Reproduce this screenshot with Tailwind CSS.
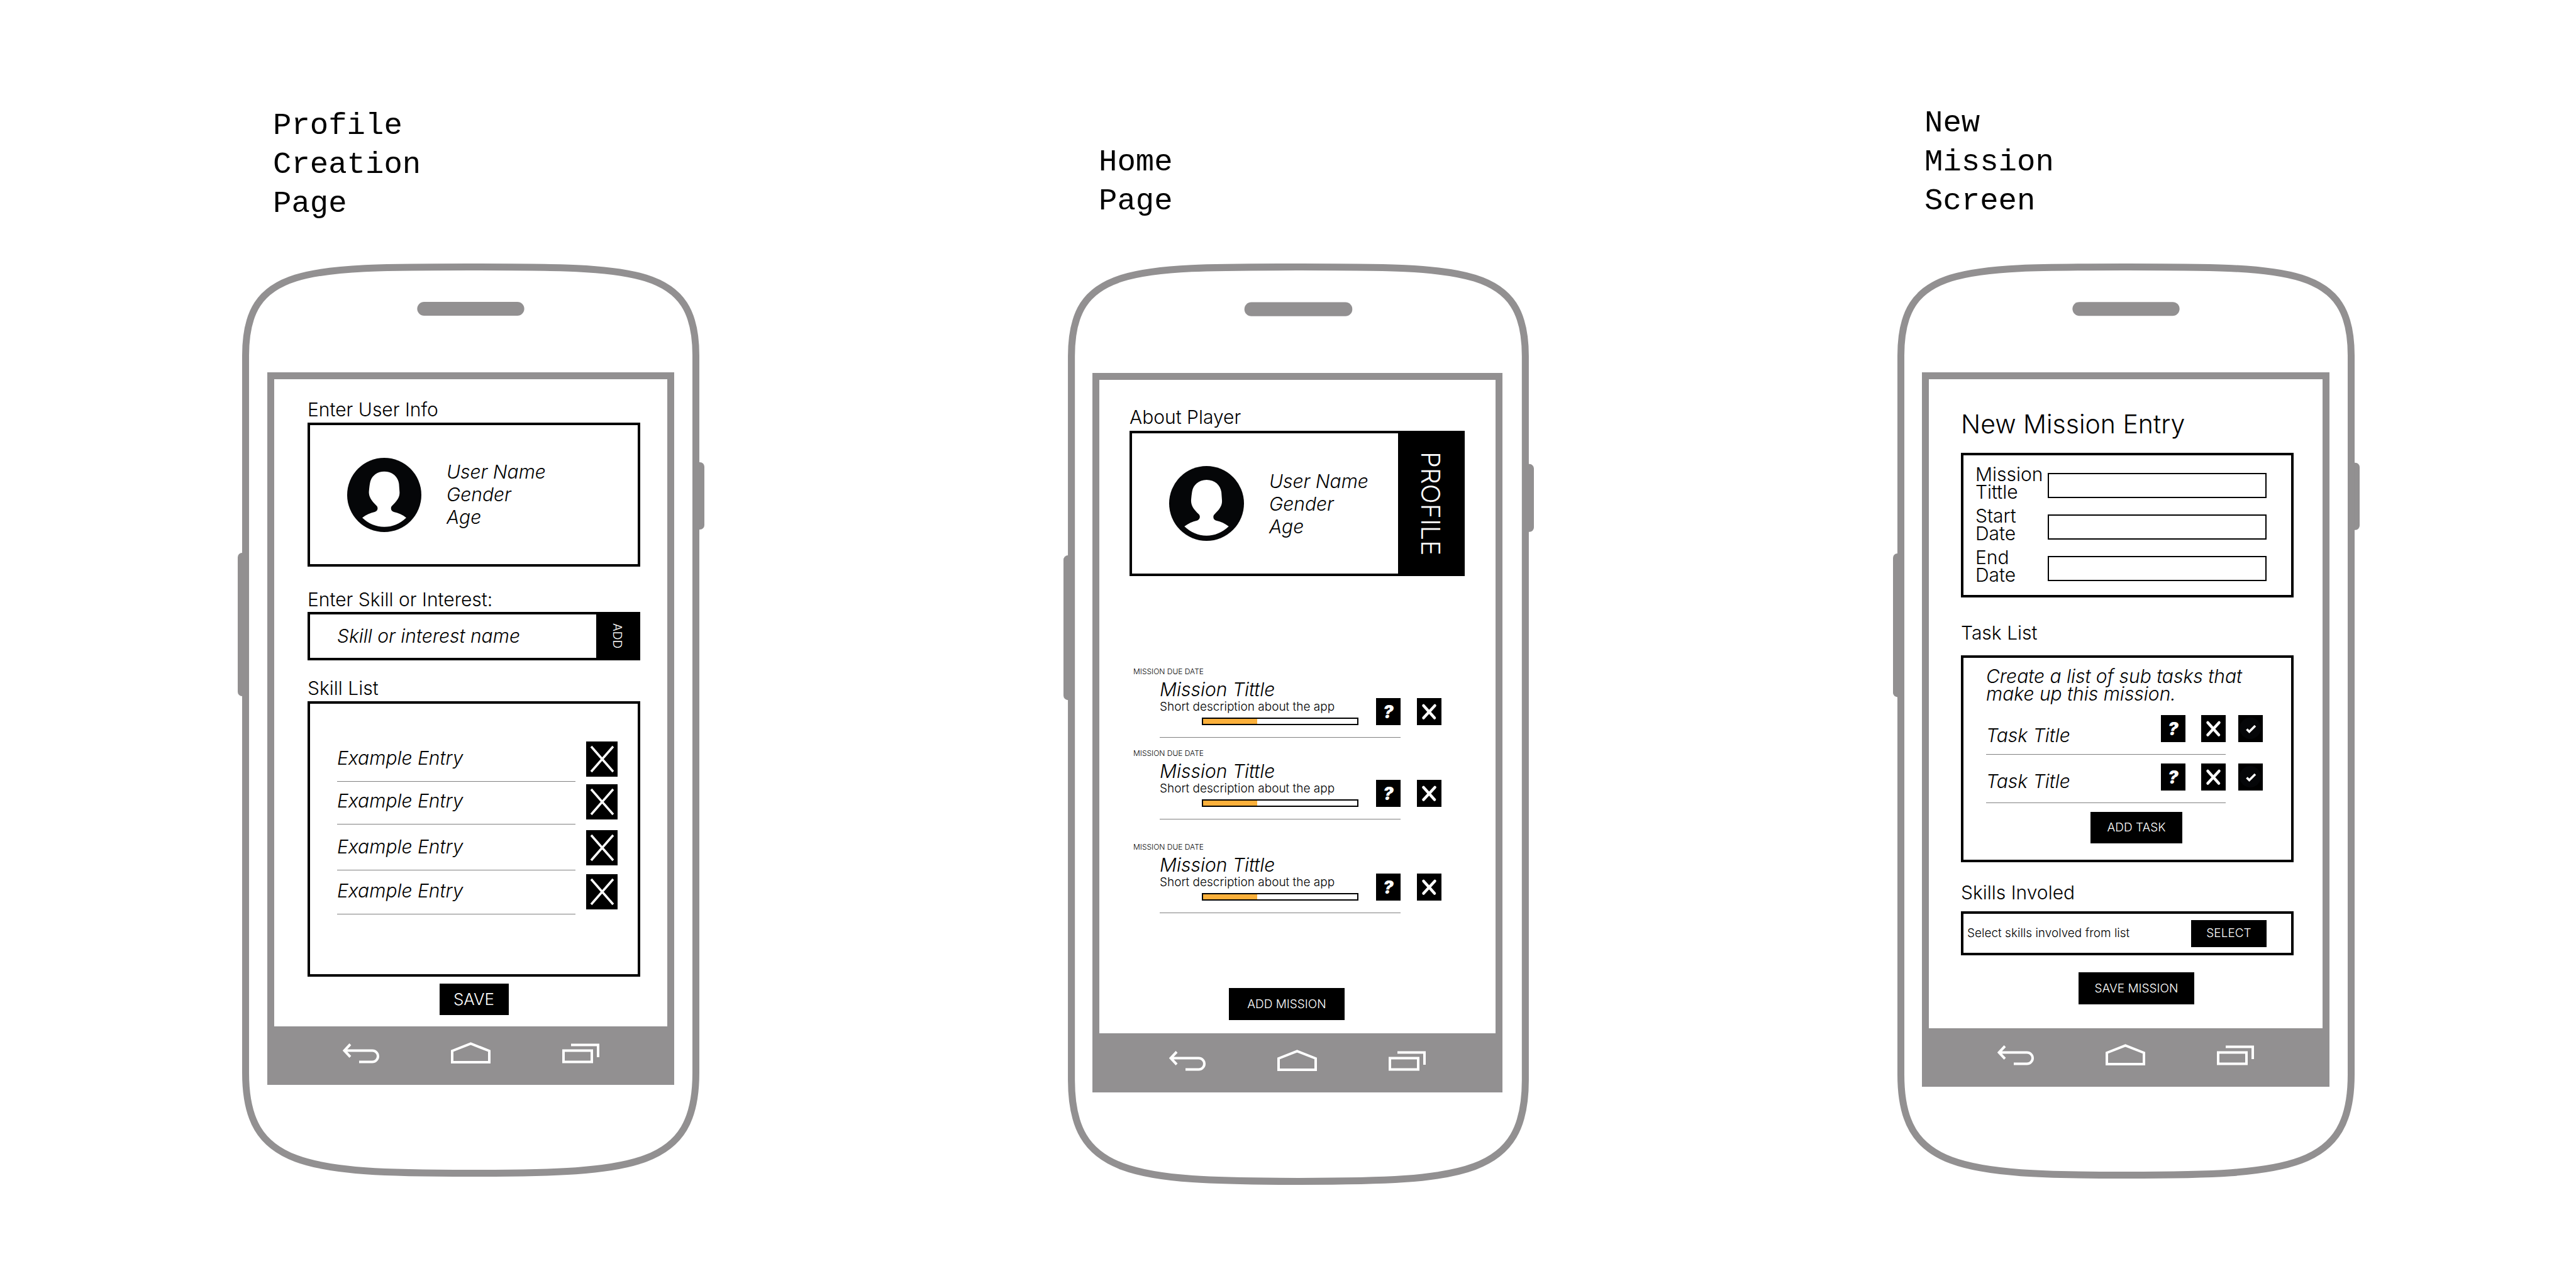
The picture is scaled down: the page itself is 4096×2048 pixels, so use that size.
<!DOCTYPE html>
<html lang="en">
<head>
<meta charset="utf-8">
<title>Mission app wireframes</title>
<script src="https://cdn.jsdelivr.net/npm/@tailwindcss/browser@4"></script>
</head>
<body class="bg-white text-black font-['Inter',sans-serif] font-light">

<!-- Shared symbols -->
<svg class="hidden" aria-hidden="true">
  <symbol id="phone" viewBox="0 0 741 1452" preserveAspectRatio="none">
    <rect x="0" y="460" width="20" height="228" rx="7" fill="#929091"/>
    <rect x="721" y="316" width="20" height="107" rx="7" fill="#929091"/>
    <path d="M12.5 146 C12.5 5 107 5.5 370 5.5 C633 5.5 727.5 5 727.5 146 V1287 C727.5 1437 633 1446.5 370 1446.5 C107 1446.5 12.5 1437 12.5 1287 Z" fill="#fff" stroke="#929091" stroke-width="11"/>
    <rect x="285" y="61" width="170" height="22" rx="11" fill="#929091"/>
  </symbol>
  <symbol id="avatar" viewBox="37 33 358 358">
    <circle cx="216" cy="212" r="179" fill="#050608"/>
    <path fill="#fff" d="M216 99C256 99 282 124 287 158L290 200C290 225 278 240 252 266C246 273 247 290 262 294C285 299 305 308 322 322C290 352 255 366 216 366C175 366 140 350 110 322C128 308 148 299 170 294C186 289 187 272 179 264C152 238 143 222 142 200C143 185 145 165 147 155C152 124 178 99 216 99Z"/>
  </symbol>
  <symbol id="back" viewBox="0 0 58 32"><path d="M12 1.5 L2.5 11.5 L12 21.5 M2.5 11.5 H47 A9 9 0 0 1 47 29.5 H26" fill="none" stroke="#fff" stroke-width="4"/></symbol>
  <symbol id="home" viewBox="0 0 63 34"><path d="M2 14 L31.5 2.5 L61 14 V32 H2 Z" fill="none" stroke="#fff" stroke-width="4"/></symbol>
  <symbol id="recents" viewBox="0 0 59 32"><path d="M2 11.5 H47 V29.5 H2 Z M14 2.5 H57 V22" fill="none" stroke="#fff" stroke-width="4"/></symbol>
  <symbol id="cross-thin" viewBox="0 0 50 56"><path d="M8 8 L43 48 M43 8 L8 48" fill="none" stroke="#fff" stroke-width="3.6"/></symbol>
  <symbol id="cross" viewBox="0 0 39 43"><path d="M10.5 12 L28 31.5 M28.5 12 L10.5 31.5" fill="none" stroke="#fff" stroke-width="4.5" stroke-linecap="round"/></symbol>
  <symbol id="check" viewBox="0 0 39 43"><circle cx="19" cy="21" r="17" fill="#050608"/><path d="M13.5 22.5 L17.5 26.5 L27 17" fill="none" stroke="#fff" stroke-width="3.6"/></symbol>
</svg>

<main class="grid grid-cols-3 min-h-screen pl-[91px] pr-[57px]">

  <!-- Profile creation -->
  <section class="flex flex-col items-center">
    <div class="w-[742px]">
      <h1 class="flex h-[419px] flex-col justify-end pb-16 pl-14 font-['Liberation_Mono',monospace] text-[49px] leading-[62px]"><span>Profile</span><span>Creation</span><span>Page</span></h1>
      <div class="relative pt-[173px] pb-[146px] pl-[47px] pr-12">
        <svg class="absolute inset-0 size-full"><use href="#phone"/></svg>
        <div class="relative bg-white border-[11px] border-b-0 border-[#929091]">
          <form class="flex flex-col pt-8 pb-[18px] pl-[53px] pr-[43px] text-[30px]">
            <h2 class="leading-8">Enter User Info</h2>
            <div class="mt-[5px] flex h-[229px] items-center gap-10 border-4 border-black pl-[59px]">
              <svg class="size-[118px] shrink-0"><use href="#avatar"/></svg>
              <div class="flex flex-col">
                <input aria-label="User Name" placeholder="User Name" class="h-9 w-64 p-0 italic placeholder:text-black">
                <input aria-label="Gender" placeholder="Gender" class="h-9 w-64 p-0 italic placeholder:text-black">
                <input aria-label="Age" placeholder="Age" class="h-9 w-64 p-0 italic placeholder:text-black">
              </div>
            </div>
            <label for="skill" class="mt-9 leading-8">Enter Skill or Interest:</label>
            <div class="mt-1 flex h-[77px] border-4 border-black">
              <input id="skill" placeholder="Skill or interest name" class="min-w-0 flex-1 pl-[43px] italic placeholder:text-black">
              <button type="button" class="flex w-[66px] items-center justify-center bg-black text-[19px] text-white"><span class="[writing-mode:vertical-rl]">ADD</span></button>
            </div>
            <h2 class="mt-7 leading-8">Skill List</h2>
            <ul class="mt-[5px] h-[438px] border-4 border-black pl-[43px] pt-14 italic leading-9">
              <li class="flex h-[68px] items-end gap-[17px]"><span class="w-[379px] border-b border-[#808080] pb-[19px]">Example Entry</span><button type="button" aria-label="Remove" class="mb-2 bg-black"><svg class="h-14 w-[50px]"><use href="#cross-thin"/></svg></button></li>
              <li class="flex h-[68px] items-end gap-[17px]"><span class="w-[379px] border-b border-[#808080] pb-[19px]">Example Entry</span><button type="button" aria-label="Remove" class="mb-2 bg-black"><svg class="h-14 w-[50px]"><use href="#cross-thin"/></svg></button></li>
              <li class="flex h-[73px] items-end gap-[17px]"><span class="w-[379px] border-b border-[#808080] pb-[19px]">Example Entry</span><button type="button" aria-label="Remove" class="mb-2 bg-black"><svg class="h-14 w-[50px]"><use href="#cross-thin"/></svg></button></li>
              <li class="flex h-[70px] items-end gap-[17px]"><span class="w-[379px] border-b border-[#808080] pb-[19px]">Example Entry</span><button type="button" aria-label="Remove" class="mb-2 bg-black"><svg class="h-14 w-[50px]"><use href="#cross-thin"/></svg></button></li>
            </ul>
            <button type="button" class="mt-[11px] h-[50px] w-[110px] self-center bg-black text-[26px] leading-8 text-white">SAVE</button>
          </form>
          <nav class="-mx-[11px] flex h-[93px] items-end justify-center gap-[114px] bg-[#929091] pb-[34px]">
            <button aria-label="Back"><svg class="h-8 w-[58px]"><use href="#back"/></svg></button>
            <button aria-label="Home"><svg class="h-[34px] w-[63px]"><use href="#home"/></svg></button>
            <button aria-label="Recent apps"><svg class="h-8 w-[59px]"><use href="#recents"/></svg></button>
          </nav>
        </div>
      </div>
    </div>
  </section>

  <!-- Home -->
  <section class="flex flex-col items-center">
    <div class="w-[748px]">
      <h1 class="flex h-[419px] flex-col justify-end pb-17 pl-14 font-['Liberation_Mono',monospace] text-[49px] leading-[62px]"><span>Home</span><span>Page</span></h1>
      <div class="relative pt-[174px] pb-[147px] pl-[46px] pr-[50px]">
        <svg class="absolute inset-0 size-full"><use href="#phone"/></svg>
        <div class="relative bg-white border-[11px] border-b-0 border-[#929091]">
          <div class="flex flex-col pt-[43px] pb-[21px] pl-12 pr-[49px] text-[30px]">
            <h2 class="leading-8">About Player</h2>
            <div class="mt-[6px] flex h-[231px] items-center gap-10 border-4 border-black pl-[59px]">
              <svg class="size-[119px] shrink-0"><use href="#avatar"/></svg>
              <p class="italic leading-9">User Name<br>Gender<br>Age</p>
              <button class="ml-auto flex w-[102px] items-center justify-center self-stretch bg-black text-[41px] text-white"><span class="[writing-mode:vertical-rl]">PROFILE</span></button>
            </div>
            <div class="mt-36 pl-[6px]">
              <article>
                <p class="text-[12px] leading-4">MISSION DUE DATE</p>
                <div class="mt-1 flex gap-[26px] pl-[42px]">
                  <div class="flex w-[383px] justify-between border-b border-[#808080] pb-[19px]">
                    <div><h3 class="leading-8 italic">Mission Tittle</h3><p class="text-[19px] leading-6">Short description about the app</p>
                      <div role="progressbar" aria-valuenow="35" class="mt-[5px] ml-[67px] h-3 w-[249px] border-2 border-black"><div class="h-full bg-[#fbb03b]" style="width:35%"></div></div></div>
                    <button class="mt-[30px] h-[43px] w-[39px] bg-black text-[28px] leading-none font-black text-white italic">?</button>
                  </div>
                  <button aria-label="Delete mission" class="mt-[30px] h-[43px] bg-black"><svg class="h-[43px] w-[39px]"><use href="#cross"/></svg></button>
                </div>
              </article>
              <article class="mt-[17px]">
                <p class="text-[12px] leading-4">MISSION DUE DATE</p>
                <div class="mt-1 flex gap-[26px] pl-[42px]">
                  <div class="flex w-[383px] justify-between border-b border-[#808080] pb-[19px]">
                    <div><h3 class="leading-8 italic">Mission Tittle</h3><p class="text-[19px] leading-6">Short description about the app</p>
                      <div role="progressbar" aria-valuenow="35" class="mt-[5px] ml-[67px] h-3 w-[249px] border-2 border-black"><div class="h-full bg-[#fbb03b]" style="width:35%"></div></div></div>
                    <button class="mt-[30px] h-[43px] w-[39px] bg-black text-[28px] leading-none font-black text-white italic">?</button>
                  </div>
                  <button aria-label="Delete mission" class="mt-[30px] h-[43px] bg-black"><svg class="h-[43px] w-[39px]"><use href="#cross"/></svg></button>
                </div>
              </article>
              <article class="mt-9">
                <p class="text-[12px] leading-4">MISSION DUE DATE</p>
                <div class="mt-1 flex gap-[26px] pl-[42px]">
                  <div class="flex w-[383px] justify-between border-b border-[#808080] pb-[19px]">
                    <div><h3 class="leading-8 italic">Mission Tittle</h3><p class="text-[19px] leading-6">Short description about the app</p>
                      <div role="progressbar" aria-valuenow="35" class="mt-[5px] ml-[67px] h-3 w-[249px] border-2 border-black"><div class="h-full bg-[#fbb03b]" style="width:35%"></div></div></div>
                    <button class="mt-[30px] h-[43px] w-[39px] bg-black text-[28px] leading-none font-black text-white italic">?</button>
                  </div>
                  <button aria-label="Delete mission" class="mt-[30px] h-[43px] bg-black"><svg class="h-[43px] w-[39px]"><use href="#cross"/></svg></button>
                </div>
              </article>
            </div>
            <button class="mt-[119px] ml-[158px] h-[51px] w-[184px] bg-black text-[19px] leading-6 text-white">ADD MISSION</button>
          </div>
          <nav class="-mx-[11px] flex h-[94px] items-end justify-center gap-[114px] bg-[#929091] pb-[34px]">
            <button aria-label="Back"><svg class="h-8 w-[58px]"><use href="#back"/></svg></button>
            <button aria-label="Home"><svg class="h-[34px] w-[63px]"><use href="#home"/></svg></button>
            <button aria-label="Recent apps"><svg class="h-8 w-[59px]"><use href="#recents"/></svg></button>
          </nav>
        </div>
      </div>
    </div>
  </section>

  <!-- New mission -->
  <section class="flex flex-col items-center">
    <div class="w-[742px]">
      <h1 class="flex h-[419px] flex-col justify-end pb-17 pl-[50px] font-['Liberation_Mono',monospace] text-[49px] leading-[62px]"><span>New</span><span>Mission</span><span>Screen</span></h1>
      <div class="relative pt-[173px] pb-[146px] pl-[46px] pr-12">
        <svg class="absolute inset-0 size-full"><use href="#phone"/></svg>
        <div class="relative bg-white border-[11px] border-b-0 border-[#929091]">
          <form class="flex flex-col pt-[47px] pb-[38px] pl-[51px] pr-[46px] text-[30px]">
            <h2 class="text-[41px] leading-12">New Mission Entry</h2>
            <div class="mt-[22px] flex h-[230px] flex-col gap-[10px] border-4 border-black pt-4 pl-[19px] leading-7">
              <div class="flex items-start"><label for="mt" class="w-[115px]">Mission<br>Tittle</label><input id="mt" class="mt-3 h-10 w-[348px] border-2 border-black"></div>
              <div class="flex items-start"><label for="sd" class="w-[115px]">Start<br>Date</label><input id="sd" class="mt-3 h-10 w-[348px] border-2 border-black"></div>
              <div class="flex items-start"><label for="ed" class="w-[115px]">End<br>Date</label><input id="ed" class="mt-3 h-10 w-[348px] border-2 border-black"></div>
            </div>
            <h2 class="mt-10 leading-8">Task List</h2>
            <div class="mt-5 h-[329px] border-4 border-black pt-[15px] pl-9">
              <p class="leading-7 italic">Create a list of sub tasks that<br>make up this mission.</p>
              <ul class="mt-5 flex flex-col gap-[14px]">
                <li class="flex h-[63px] gap-5">
                  <div class="flex w-[381px] border-b border-[#808080]">
                    <span class="mt-[14px] flex-1 leading-9 italic">Task Title</span>
                    <button type="button" class="h-[43px] w-[39px] bg-black text-[28px] leading-none font-black text-white italic">?</button>
                    <button type="button" aria-label="Delete task" class="ml-[25px] h-[43px] bg-black"><svg class="h-[43px] w-[39px]"><use href="#cross"/></svg></button>
                  </div>
                  <button type="button" aria-label="Complete task" class="h-[43px] bg-black"><svg class="h-[43px] w-[39px]"><use href="#check"/></svg></button>
                </li>
                <li class="flex h-[63px] gap-5">
                  <div class="flex w-[381px] border-b border-[#808080]">
                    <span class="mt-[10px] flex-1 leading-9 italic">Task Title</span>
                    <button type="button" class="h-[43px] w-[39px] bg-black text-[28px] leading-none font-black text-white italic">?</button>
                    <button type="button" aria-label="Delete task" class="ml-[25px] h-[43px] bg-black"><svg class="h-[43px] w-[39px]"><use href="#cross"/></svg></button>
                  </div>
                  <button type="button" aria-label="Complete task" class="h-[43px] bg-black"><svg class="h-[43px] w-[39px]"><use href="#check"/></svg></button>
                </li>
              </ul>
              <button type="button" class="mt-[14px] ml-[166px] block h-[50px] w-[146px] bg-black text-[19px] leading-6 text-white">ADD TASK</button>
            </div>
            <h2 class="mt-8 leading-8">Skills Involed</h2>
            <div class="mt-[14px] flex h-[70px] items-center justify-between border-4 border-black pr-[39px] pl-[6px]">
              <span class="text-[19px] leading-6">Select skills involved from list</span>
              <button type="button" class="h-[43px] w-[120px] bg-black text-[19px] leading-6 text-white">SELECT</button>
            </div>
            <button type="button" class="mt-[27px] ml-[187px] h-[51px] w-[184px] bg-black text-[19px] leading-6 text-white">SAVE MISSION</button>
          </form>
          <nav class="-mx-[11px] flex h-[93px] items-end justify-center gap-[114px] bg-[#929091] pb-[34px]">
            <button aria-label="Back"><svg class="h-8 w-[58px]"><use href="#back"/></svg></button>
            <button aria-label="Home"><svg class="h-[34px] w-[63px]"><use href="#home"/></svg></button>
            <button aria-label="Recent apps"><svg class="h-8 w-[59px]"><use href="#recents"/></svg></button>
          </nav>
        </div>
      </div>
    </div>
  </section>
</main>
</body>
</html>
